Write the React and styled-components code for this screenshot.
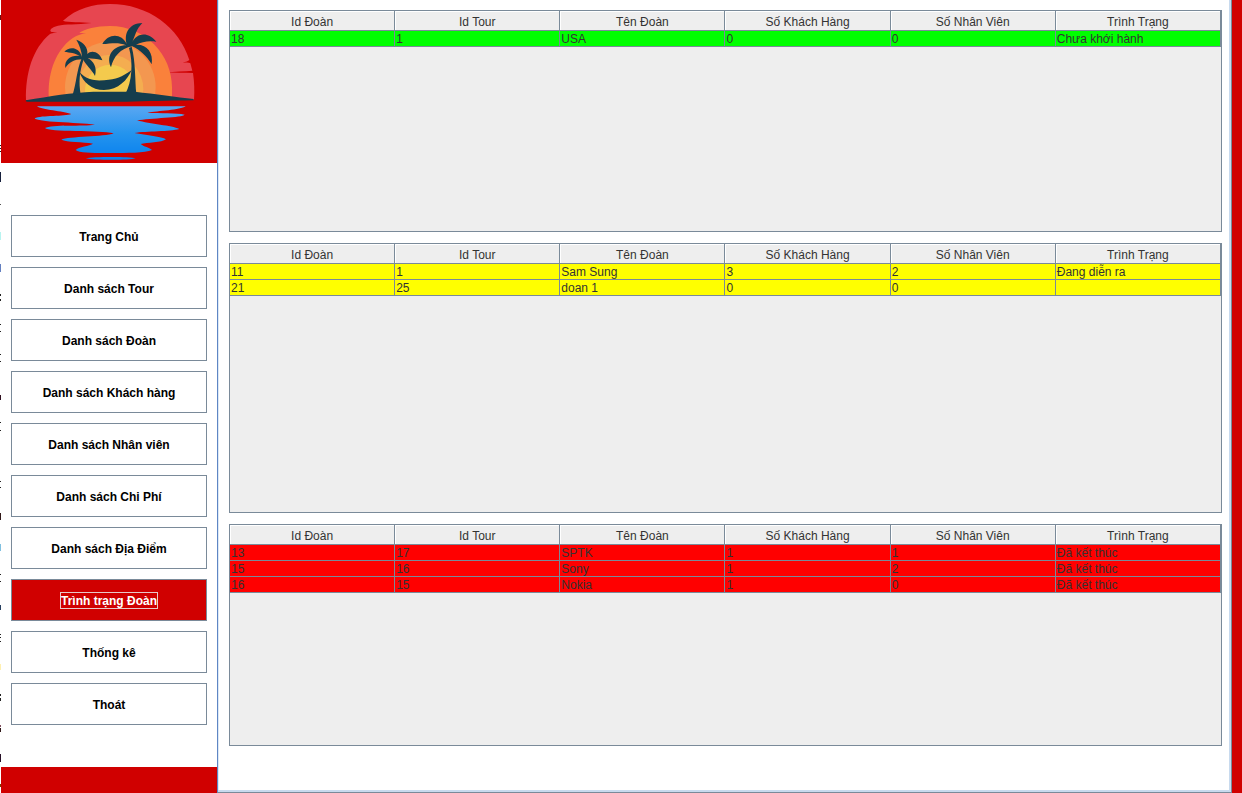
import React from 'react';
import styled, { createGlobalStyle } from 'styled-components';

const RED = '#d00000';
const LINE = '#7a8a99';

const GlobalStyle = createGlobalStyle`
  * { box-sizing: border-box; }
  body {
    margin: 0;
    background: #fff;
    color: #333;
    font: 12px/16px "Liberation Sans", Arial, sans-serif;
  }
`;

const Shell = styled.div`
  display: flex;
  min-height: 100vh;
`;

/* Sliver of the editor window that shows behind the application frame. */
const BackdropEdge = styled.div`
  flex: 0 0 1px;
  background: linear-gradient(
    #fff 15px, #701010 15px 20px, #fff 20px 145px,
    #222 145px 146px, #fff 146px 148px, #222 148px 149px, #fff 149px 151px, #222 151px 152px, #fff 152px 172px,
    #16203c 172px 182px, #fff 182px 204px, #555 204px 205px, #fff 205px 232px,
    #b8f4f0 232px 240px, #fff 240px 264px, #6480c0 264px 272px, #fff 272px 294px,
    #222 294px 296px, #fff 296px 299px, #222 299px 301px, #fff 301px 324px,
    #222 324px 325px, #fff 325px 331px, #222 331px 332px, #fff 332px 354px,
    #222 354px 355px, #fff 355px 361px, #222 361px 362px, #fff 362px 395px,
    #301020 395px 400px, #fff 400px 422px,
    #222 422px 423px, #fff 423px 430px, #222 430px 431px, #fff 431px 481px,
    #222 481px 482px, #fff 482px 487px, #222 487px 488px, #fff 488px 513px,
    #301818 513px 520px, #fff 520px 544px, #80c0e0 544px 551px, #fff 551px 574px,
    #222 574px 575px, #fff 575px 581px, #222 581px 582px, #fff 582px 605px,
    #284060 605px 610px, #fff 610px 634px,
    #222 634px 635px, #fff 635px 637px, #222 637px 638px, #fff 638px 641px, #222 641px 642px, #fff 642px 664px,
    #fff0b0 664px 670px, #fff 670px 694px,
    #222 694px 696px, #fff 696px 698px, #222 698px 701px, #fff 701px 725px,
    #805060 725px 727px, #fff 727px 728px, #301818 728px 732px, #fff 732px 754px,
    #281028 754px 762px, #fff 762px 784px, #804000 784px 787px, #fff 787px
  );
`;

const Sidebar = styled.aside`
  flex: 0 0 216px;
  display: flex;
  flex-direction: column;
  background: #fff;
`;

const LogoPanel = styled.div`
  height: 163px;
  background: ${RED};
  svg { display: block; width: 100%; height: 100%; }
`;

const Nav = styled.nav`
  flex: 1;
  display: flex;
  flex-direction: column;
  gap: 10px;
  padding: 52px 10px 42px;
`;

const NavButton = styled.button`
  height: 42px;
  padding: 1px 0 0;
  border: 1px solid ${LINE};
  border-radius: 0;
  background: ${({ $active }) => ($active ? RED : '#fff')};
  color: ${({ $active }) => ($active ? '#fff' : '#000')};
  font: bold 12px/14px "Liberation Sans", Arial, sans-serif;
  cursor: pointer;
`;

const NavLabel = styled.span`
  display: inline-block;
  padding-top: 1px;
  border: 1px solid ${({ $active }) => ($active ? '#e8c8c8' : 'transparent')};
`;

const SidebarFooter = styled.div`
  height: 26px;
  background: ${RED};
`;

const Main = styled.main`
  flex: 1;
  min-width: 0;
  display: flex;
  flex-direction: column;
  gap: 11px;
  padding: 10px 9px 10px 11px;
  border: solid ${LINE};
  border-width: 0 1px 1px;
  border-left-color: #5f86c4;
  box-shadow: inset -2px -2px 0 #c8daee, inset 1px 0 0 #dce9f6;
`;

const RightEdge = styled.div`
  flex: 0 0 10px;
  background: ${RED};
`;

const TablePane = styled.section`
  height: ${({ $tall }) => ($tall ? 270 : 222)}px;
  border: 1px solid ${LINE};
  background: #eee;
`;

const Table = styled.table`
  width: 100%;
  table-layout: fixed;
  border-collapse: separate;
  border-spacing: 0;
`;

const HeadCell = styled.th`
  height: 20px;
  padding: 2px 0 0;
  border-right: 1px solid ${LINE};
  border-bottom: 1px solid ${LINE};
  box-shadow: inset 1px 1px 0 #fff;
  font-weight: normal;
  line-height: 16px;
`;

const Cell = styled.td`
  height: 16px;
  padding: 2px 0 0 1px;
  border-right: 1px solid ${LINE};
  border-bottom: 1px solid ${LINE};
  background: ${({ $tone }) => $tone};
  line-height: 13px;
  white-space: nowrap;
`;

const NAV = [
  'Trang Chủ',
  'Danh sách Tour',
  'Danh sách Đoàn',
  'Danh sách Khách hàng',
  'Danh sách Nhân viên',
  'Danh sách Chi Phí',
  'Danh sách Địa Điểm',
  'Trình trạng Đoàn',
  'Thống kê',
  'Thoát',
];

const COLUMNS = ['Id Đoàn', 'Id Tour', 'Tên Đoàn', 'Số Khách Hàng', 'Số Nhân Viên', 'Trình Trạng'];

const GROUPS = [
  {
    label: 'Chưa khới hành',
    tone: '#00ff00',
    rows: [['18', '1', 'USA', '0', '0', 'Chưa khới hành']],
  },
  {
    label: 'Đang diễn ra',
    tone: '#ffff00',
    tall: true,
    rows: [
      ['11', '1', 'Sam Sung', '3', '2', 'Đang diễn ra'],
      ['21', '25', 'doan 1', '0', '0', ''],
    ],
  },
  {
    label: 'Đã kết thúc',
    tone: '#ff0000',
    rows: [
      ['13', '17', 'SPTK', '1', '1', 'Đã kết thúc'],
      ['15', '16', 'Sony', '1', '2', 'Đã kết thúc'],
      ['16', '15', 'Nokia', '1', '0', 'Đã kết thúc'],
    ],
  },
];

function Logo() {
  return (
    <svg viewBox="3 0 648 489" preserveAspectRatio="none" aria-hidden="true">
      <defs>
        <linearGradient id="sea" gradientUnits="userSpaceOnUse" x1="0" y1="319" x2="0" y2="480">
          <stop offset="0" stopColor="#5aa7f2" />
          <stop offset="0.5" stopColor="#2494ee" />
          <stop offset="1" stopColor="#0880ee" />
        </linearGradient>
        <clipPath id="horizon">
          <rect x="70" y="0" width="520" height="298" />
        </clipPath>
      </defs>
      <path
        fill="#e74650"
        d="M78 300C76 220 98 145 150 102C158 98 164 99 172 99C162 96 152 97 151 92C151 86 160 80 174 77C195 72 230 75 275 69C244 66 205 68 189 62C230 25 280 12 330 12C445 12 538 82 568 180C562 185 555 186 548 187C557 188 566 187 571 190L577 212C554 215 525 214 495 217C524 219 553 217 579 219C583 246 584 272 582 300Z"
      />
      <g clipPath="url(#horizon)">
        <path fill="#fa813b" d="M147 300C141 224 165 160 206 124C224 108 237 104 258 99C250 99 241 99 238 98C254 88 288 78 330 78C437 78 516 165 516 262V300Z" />
        <ellipse cx="331" cy="262" rx="136" ry="137" fill="#f39750" />
        <ellipse cx="331" cy="268" rx="99" ry="104" fill="#f4ad50" />
        <ellipse cx="331" cy="272" rx="76" ry="78" fill="#f4ca4d" />
      </g>
      <g fill="#153d4d">
        <path d="M78 301C150 288 215 278 280 275H405C465 282 530 291 581 297V301C500 302 440 304 380 305H82C78 305 76 303 78 301Z" />
        <path d="M218 284C229 250 230 210 245 175L251 178C238 216 236 247 242 284Z" />
        <path d="M376 282C396 245 400 190 387 144L395 140C407 184 405 242 409 282Z" />
        <path d="M238 216C267 247 300 242 326 239C357 236 376 224 395 210C382 240 356 269 312 270C274 270 250 247 238 216Z" />
        <path d="M246 171C245 152 238 134 229 119C249 125 265 143 262 162C276 147 300 158 307 181C288 176 276 176 263 174C281 184 292 202 285 228C277 211 256 194 249 178C225 177 207 187 196 204C192 179 214 165 239 168C226 158 210 158 193 155C207 139 237 139 246 171Z" />
        <path d="M380 132C371 99 388 70 427 69C408 88 405 109 397 126C411 99 444 94 469 125C444 121 426 126 408 134C440 132 461 157 455 193C440 168 421 151 397 139C361 145 340 171 333 202C316 166 342 136 379 136C353 125 334 131 307 132C325 99 365 99 380 132Z" />
      </g>
      <g fill="url(#sea)">
        <path d="M111 319H557C540 330 475 333 442 338C480 340 530 338 554 344C548 353 450 354 411 361C450 373 515 376 538 387C510 395 440 393 403 399C440 406 485 409 498 418C486 428 440 428 422 432C430 439 450 444 456 450C435 459 380 459 337 459C290 459 240 460 227 450C235 440 270 438 279 431C250 425 200 427 184 419C205 409 315 411 341 400C300 390 145 397 135 384C155 372 250 380 285 374C230 367 110 367 104 355C125 345 195 350 214 342C190 333 125 330 111 319Z" />
        <path d="M257 475C280 470 390 470 407 475C390 481 280 481 257 475Z" />
      </g>
    </svg>
  );
}

function GroupTable({ label, tone, tall, rows }) {
  return (
    <TablePane $tall={tall}>
      <Table aria-label={label}>
        <thead>
          <tr>
            {COLUMNS.map((name) => (
              <HeadCell key={name} scope="col">{name}</HeadCell>
            ))}
          </tr>
        </thead>
        <tbody>
          {rows.map((row) => (
            <tr key={row[0]}>
              {row.map((value, i) => (
                <Cell key={COLUMNS[i]} $tone={tone}>{value}</Cell>
              ))}
            </tr>
          ))}
        </tbody>
      </Table>
    </TablePane>
  );
}

export default function App() {
  return (
    <>
      <GlobalStyle />
      <Shell>
        <BackdropEdge />
        <Sidebar>
          <LogoPanel><Logo /></LogoPanel>
          <Nav>
            {NAV.map((label) => {
              const active = label === 'Trình trạng Đoàn';
              return (
                <NavButton key={label} type="button" $active={active} aria-current={active ? 'page' : undefined}>
                  <NavLabel $active={active}>{label}</NavLabel>
                </NavButton>
              );
            })}
          </Nav>
          <SidebarFooter />
        </Sidebar>
        <Main>
          {GROUPS.map((group) => (
            <GroupTable key={group.label} {...group} />
          ))}
        </Main>
        <RightEdge />
      </Shell>
    </>
  );
}
